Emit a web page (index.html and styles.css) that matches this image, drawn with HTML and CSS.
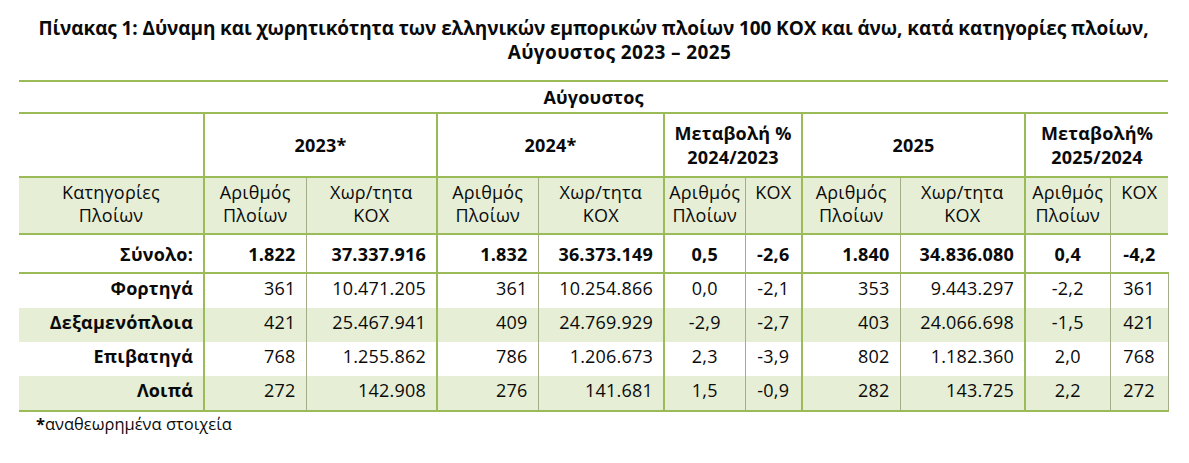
FILE: index.html
```html
<!DOCTYPE html>
<html lang="el">
<head>
<meta charset="utf-8">
<title>Πίνακας 1</title>
<link rel="stylesheet" href="styles.css">
</head>
<body>
<div class="page">
  <h1 class="title">Πίνακας 1: Δύναμη και χωρητικότητα των ελληνικών εμπορικών πλοίων 100 ΚΟΧ και άνω, κατά κατηγορίες πλοίων,<br><span class="title-2">Αύγουστος 2023 – 2025</span></h1>
  <table class="stats">
    <colgroup>
      <col class="w1"><col class="w2"><col class="w3"><col class="w4"><col class="w5"><col class="w6"><col class="w7"><col class="w8"><col class="w9"><col class="w10"><col class="w11">
    </colgroup>
    <thead>
      <tr class="r-month"><th colspan="11">Αύγουστος</th></tr>
      <tr class="r-years">
        <th></th>
        <th colspan="2" class="gl">2023*</th>
        <th colspan="2" class="gl">2024*</th>
        <th colspan="2" class="gl">Μεταβολή %<br>2024/2023</th>
        <th colspan="2" class="gl">2025</th>
        <th colspan="2" class="gl">Μεταβολή%<br>2025/2024</th>
      </tr>
      <tr class="r-sub">
        <th>Κατηγορίες<br>Πλοίων</th>
        <th class="gl">Αριθμός<br>Πλοίων</th>
        <th class="tl">Χωρ/τητα<br>ΚΟΧ</th>
        <th class="gl">Αριθμός<br>Πλοίων</th>
        <th class="tl">Χωρ/τητα<br>ΚΟΧ</th>
        <th class="gl">Αριθμός<br>Πλοίων</th>
        <th class="tl">ΚΟΧ</th>
        <th class="gl">Αριθμός<br>Πλοίων</th>
        <th class="tl">Χωρ/τητα<br>ΚΟΧ</th>
        <th class="gl">Αριθμός<br>Πλοίων</th>
        <th class="tl">ΚΟΧ</th>
      </tr>
    </thead>
    <tbody>
      <tr class="r-total">
        <th class="lab">Σύνολο:</th>
        <td class="gl num">1.822</td><td class="tl num">37.337.916</td>
        <td class="gl num">1.832</td><td class="tl num">36.373.149</td>
        <td class="gl ctr">0,5</td><td class="tl ctr">-2,6</td>
        <td class="gl num">1.840</td><td class="tl num">34.836.080</td>
        <td class="gl ctr">0,4</td><td class="tl ctr">-4,2</td>
      </tr>
      <tr class="r-data">
        <th class="lab">Φορτηγά</th>
        <td class="gl num">361</td><td class="tl num">10.471.205</td>
        <td class="gl num">361</td><td class="tl num">10.254.866</td>
        <td class="gl ctr">0,0</td><td class="tl ctr">-2,1</td>
        <td class="gl num">353</td><td class="tl num">9.443.297</td>
        <td class="gl ctr">-2,2</td><td class="tl ctr last">361</td>
      </tr>
      <tr class="r-data band">
        <th class="lab">Δεξαμενόπλοια</th>
        <td class="gl num">421</td><td class="tl num">25.467.941</td>
        <td class="gl num">409</td><td class="tl num">24.769.929</td>
        <td class="gl ctr">-2,9</td><td class="tl ctr">-2,7</td>
        <td class="gl num">403</td><td class="tl num">24.066.698</td>
        <td class="gl ctr">-1,5</td><td class="tl ctr last">421</td>
      </tr>
      <tr class="r-data">
        <th class="lab">Επιβατηγά</th>
        <td class="gl num">768</td><td class="tl num">1.255.862</td>
        <td class="gl num">786</td><td class="tl num">1.206.673</td>
        <td class="gl ctr">2,3</td><td class="tl ctr">-3,9</td>
        <td class="gl num">802</td><td class="tl num">1.182.360</td>
        <td class="gl ctr">2,0</td><td class="tl ctr last">768</td>
      </tr>
      <tr class="r-data band r-end">
        <th class="lab">Λοιπά</th>
        <td class="gl num">272</td><td class="tl num">142.908</td>
        <td class="gl num">276</td><td class="tl num">141.681</td>
        <td class="gl ctr">1,5</td><td class="tl ctr">-0,9</td>
        <td class="gl num">282</td><td class="tl num">143.725</td>
        <td class="gl ctr">2,2</td><td class="tl ctr last">272</td>
      </tr>
    </tbody>
  </table>
  <p class="note"><b class="star">*</b>αναθεωρημένα στοιχεία</p>
</div>
</body>
</html>
```

FILE: styles.css
```css
html, body {
  margin: 0;
  padding: 0;
  background: #ffffff;
}

body {
  font-family: "Open Sans", "Noto Sans", "DejaVu Sans", sans-serif;
  color: #0a0a0a;
}

.page {
  padding: 16px 21px 0 19px;
}

.title {
  margin: 0 0 16px;
  font-size: 19px;
  line-height: 24px;
  font-weight: 700;
  text-align: center;
  letter-spacing: -0.1px;
}

.title-2 {
  padding-left: 52px;
  letter-spacing: 0.4px;
}

.stats {
  width: 1149px;
  table-layout: fixed;
  border-collapse: collapse;
  font-size: 18px;
  letter-spacing: 0.2px;
}

.w1 { width: 185px; }
.w2 { width: 102px; }
.w3 { width: 131px; }
.w4 { width: 101px; }
.w5 { width: 126px; }
.w6 { width: 81px; }
.w7 { width: 57px; }
.w8 { width: 98px; }
.w9 { width: 125px; }
.w10 { width: 85px; }
.w11 { width: 58px; }

.stats th,
.stats td {
  padding: 0;
  white-space: nowrap;
}

.r-month th {
  height: 30px;
  border-top: 2px solid #9bbb59;
  border-bottom: 2px solid #9bbb59;
  font-weight: 700;
  text-align: center;
  vertical-align: middle;
}

.r-years th {
  height: 62px;
  font-weight: 700;
  line-height: 24px;
  text-align: center;
  vertical-align: middle;
}

.stats .r-sub th {
  height: 52px;
  background: #e6eed5;
  border-top: 2px solid #9bbb59;
  border-bottom: 2px solid #9bbb59;
  font-weight: 400;
  line-height: 23px;
  text-align: center;
  vertical-align: top;
  padding-top: 3px;
}

.r-total th,
.r-total td {
  height: 37px;
  font-weight: 700;
  border-bottom: 2px solid #9bbb59;
}

.stats .r-data th,
.stats .r-data td {
  height: 34px;
  line-height: 28px;
  vertical-align: top;
}

.r-data td {
  font-weight: 400;
}

.band th,
.band td {
  background: #e6eed5;
}

.r-end th,
.r-end td {
  border-bottom: 2px solid #9bbb59;
}

.stats .lab {
  text-align: right;
  padding-right: 10px;
  font-weight: 700;
}

.stats .num {
  text-align: right;
  padding-right: 10px;
}

.ctr {
  text-align: center;
}

.gl {
  border-left: 2px solid #9bbb59;
}

.tl {
  border-left: 1px solid #a3ad88;
}

.r-data .last {
  border-right: 1px solid #a3ad88;
}

.note {
  margin: 2px 0 0 17px;
  font-size: 16.5px;
  line-height: 20px;
}

.star {
  font-weight: 700;
}
```
